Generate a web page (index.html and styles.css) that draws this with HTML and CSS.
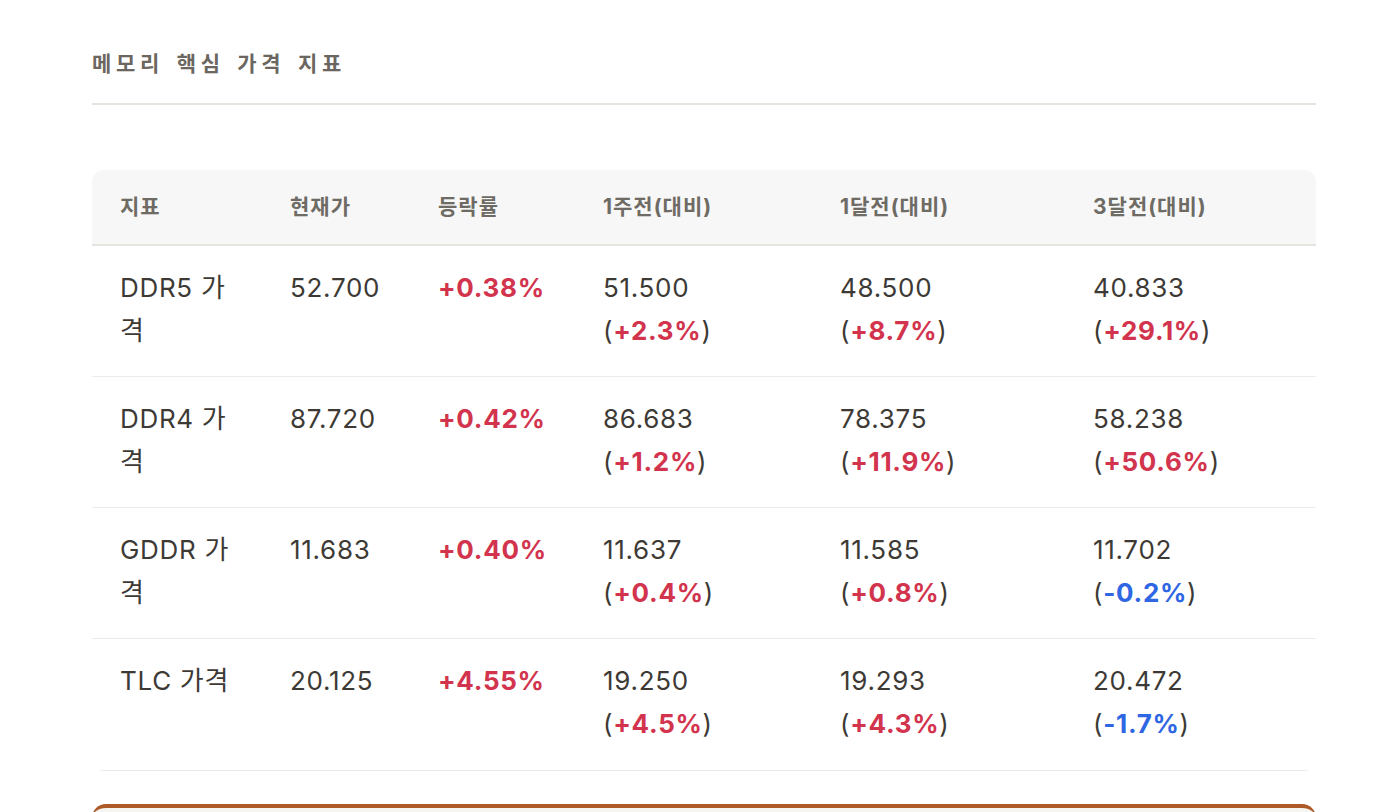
FILE: index.html
```html
<!DOCTYPE html>
<html lang="ko">
<head>
<meta charset="utf-8">
<title>메모리 핵심 가격 지표</title>
<link rel="stylesheet" href="styles.css">
</head>
<body>
<main class="page">
  <h2 class="section-title">메모리 핵심 가격 지표</h2>
  <div class="table-wrap">
    <table class="price-table">
      <colgroup>
        <col class="c-name"><col class="c-now"><col class="c-chg"><col class="c-w1"><col class="c-m1"><col class="c-m3">
      </colgroup>
      <thead>
        <tr>
          <th>지표</th><th>현재가</th><th>등락률</th><th>1주전(대비)</th><th>1달전(대비)</th><th>3달전(대비)</th>
        </tr>
      </thead>
      <tbody>
        <tr>
          <td>DDR5 가격</td><td>52.700</td><td class="up">+0.38%</td>
          <td>51.500<br>(<span class="up">+2.3%</span>)</td>
          <td>48.500<br>(<span class="up">+8.7%</span>)</td>
          <td>40.833<br>(<span class="up">+29.1%</span>)</td>
        </tr>
        <tr>
          <td>DDR4 가격</td><td>87.720</td><td class="up">+0.42%</td>
          <td>86.683<br>(<span class="up">+1.2%</span>)</td>
          <td>78.375<br>(<span class="up">+11.9%</span>)</td>
          <td>58.238<br>(<span class="up">+50.6%</span>)</td>
        </tr>
        <tr>
          <td>GDDR 가격</td><td>11.683</td><td class="up">+0.40%</td>
          <td>11.637<br>(<span class="up">+0.4%</span>)</td>
          <td>11.585<br>(<span class="up">+0.8%</span>)</td>
          <td>11.702<br>(<span class="down">-0.2%</span>)</td>
        </tr>
        <tr>
          <td>TLC 가격</td><td>20.125</td><td class="up">+4.55%</td>
          <td>19.250<br>(<span class="up">+4.5%</span>)</td>
          <td>19.293<br>(<span class="up">+4.3%</span>)</td>
          <td>20.472<br>(<span class="down">-1.7%</span>)</td>
        </tr>
      </tbody>
    </table>
  </div>
  <div class="next-card"></div>
</main>
</body>
</html>
```
FILE: styles.css
```css
* { box-sizing: border-box; }
html, body { margin: 0; padding: 0; background: #ffffff; }
body {
  font-family: Inter, "Noto Sans CJK KR", "Noto Sans", sans-serif;
  color: #3d3a36;
}
.page {
  padding: 44px 70px 0 92px;
}
.section-title {
  margin: 0;
  font-family: "Noto Sans CJK KR", sans-serif;
  font-size: 21px;
  font-weight: 700;
  letter-spacing: 4.7px;
  word-spacing: 2px;
  line-height: 36px;
  color: #6b6760;
  padding-bottom: 23px;
  border-bottom: 2px solid #e7e5e0;
}
.table-wrap {
  margin-top: 65px;
  border-radius: 12px;
  overflow: hidden;
}
.price-table {
  width: 100%;
  border-collapse: collapse;
  table-layout: fixed;
}
.c-name { width: 170px; }
.c-now { width: 148px; }
.c-chg { width: 165px; }
.c-w1 { width: 237px; }
.c-m1 { width: 253px; }
.c-m3 { width: 251px; }
.price-table th {
  background: #f7f7f8;
  text-align: left;
  font-size: 21px;
  font-weight: 700;
  letter-spacing: 1px;
  color: #6e6b64;
  padding: 25px 20px 25px 28px;
  line-height: 24px;
  border-bottom: 2px solid #e7e5e0;
}
.price-table td {
  vertical-align: top;
  text-align: left;
  font-size: 26px;
  letter-spacing: 0.7px;
  line-height: 43px;
  padding: 20px 20px 24px 28px;
  border-bottom: 1px solid #ecebe7;
  color: #3d3a36;
}
.price-table .up { color: #d2334d; font-weight: 700; }
.price-table .down { color: #2f66e3; font-weight: 700; }
.price-table tbody tr:last-child td { padding-bottom: 25px; }
.next-card {
  margin-top: 33px;
  height: 40px;
  border-top: 4px solid #ad5a28;
  border-radius: 14px 14px 0 0;
  background: #f7f5f0;
}
```
